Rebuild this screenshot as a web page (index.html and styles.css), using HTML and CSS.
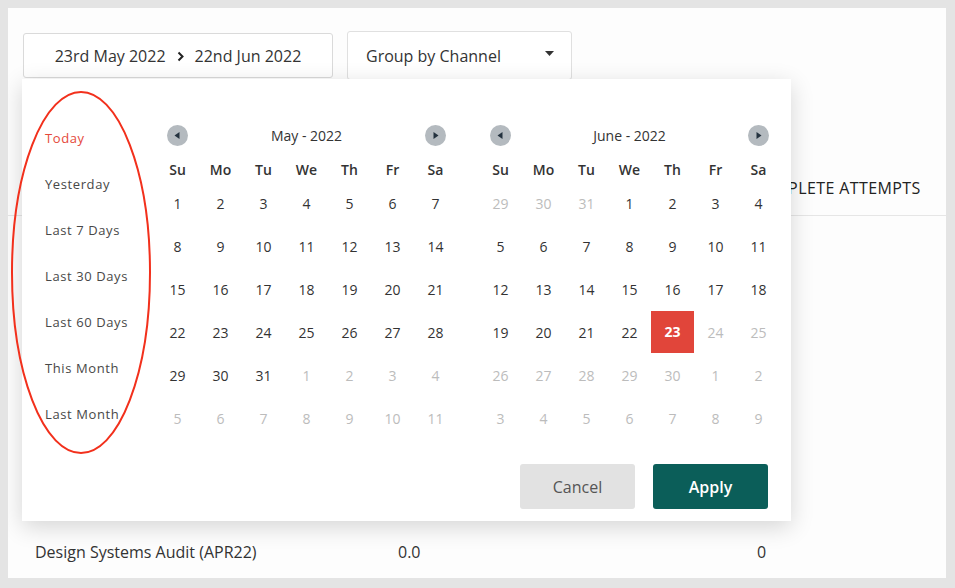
FILE: index.html
```html
<!DOCTYPE html>
<html lang="en">
<head>
<meta charset="utf-8">
<title>Date range picker</title>
<link rel="stylesheet" href="styles.css">
</head>
<body>
<div class="card">
  <div class="toolbar">
    <button class="range">
      <span>23rd May 2022</span>
      <svg class="chev" width="7" height="11" viewBox="0 0 7 11"><path d="M1.5 1.5 L5.5 5.5 L1.5 9.5" fill="none" stroke="#222" stroke-width="2"/></svg>
      <span>22nd Jun 2022</span>
    </button>
    <div class="select">
      <span>Group by Channel</span>
      <svg width="9" height="5" viewBox="0 0 9 5"><path d="M0 0 H9 L4.5 5 Z" fill="#333"/></svg>
    </div>
  </div>

  <div class="table">
    <div class="thead">
      <span class="c1"></span>
      <span class="c2"></span>
      <span class="c3">COMPLETE ATTEMPTS</span>
    </div>
    <div class="trow">
      <span class="c1">Design Systems Audit (APR22)</span>
      <span class="c2">0.0</span>
      <span class="c3">0</span>
    </div>
  </div>

  <div class="picker">
    <div class="picker-body">
      <ul class="presets">
        <li class="active">Today</li>
        <li>Yesterday</li>
        <li>Last 7 Days</li>
        <li>Last 30 Days</li>
        <li>Last 60 Days</li>
        <li>This Month</li>
        <li>Last Month</li>
      </ul>
      <div class="months">
        <div class="month">
          <div class="nav">
            <svg class="navbtn" width="21" height="21" viewBox="0 0 21 21"><circle cx="10.5" cy="10.5" r="10.5" fill="#b4babf"/><path d="M7.5 10.5 L12.5 7 V14 Z" fill="#24323f"/></svg>
            <span class="title">May - 2022</span>
            <svg class="navbtn" width="21" height="21" viewBox="0 0 21 21"><circle cx="10.5" cy="10.5" r="10.5" fill="#b4babf"/><path d="M13.5 10.5 L8.5 7 V14 Z" fill="#24323f"/></svg>
          </div>
          <div class="dow"><span>Su</span><span>Mo</span><span>Tu</span><span>We</span><span>Th</span><span>Fr</span><span>Sa</span></div>
          <div class="grid">
            <span>1</span><span>2</span><span>3</span><span>4</span><span>5</span><span>6</span><span>7</span>
            <span>8</span><span>9</span><span>10</span><span>11</span><span>12</span><span>13</span><span>14</span>
            <span>15</span><span>16</span><span>17</span><span>18</span><span>19</span><span>20</span><span>21</span>
            <span>22</span><span>23</span><span>24</span><span>25</span><span>26</span><span>27</span><span>28</span>
            <span>29</span><span>30</span><span>31</span><span class="off">1</span><span class="off">2</span><span class="off">3</span><span class="off">4</span>
            <span class="off">5</span><span class="off">6</span><span class="off">7</span><span class="off">8</span><span class="off">9</span><span class="off">10</span><span class="off">11</span>
          </div>
        </div>
        <div class="month">
          <div class="nav">
            <svg class="navbtn" width="21" height="21" viewBox="0 0 21 21"><circle cx="10.5" cy="10.5" r="10.5" fill="#b4babf"/><path d="M7.5 10.5 L12.5 7 V14 Z" fill="#24323f"/></svg>
            <span class="title">June - 2022</span>
            <svg class="navbtn" width="21" height="21" viewBox="0 0 21 21"><circle cx="10.5" cy="10.5" r="10.5" fill="#b4babf"/><path d="M13.5 10.5 L8.5 7 V14 Z" fill="#24323f"/></svg>
          </div>
          <div class="dow"><span>Su</span><span>Mo</span><span>Tu</span><span>We</span><span>Th</span><span>Fr</span><span>Sa</span></div>
          <div class="grid">
            <span class="off">29</span><span class="off">30</span><span class="off">31</span><span>1</span><span>2</span><span>3</span><span>4</span>
            <span>5</span><span>6</span><span>7</span><span>8</span><span>9</span><span>10</span><span>11</span>
            <span>12</span><span>13</span><span>14</span><span>15</span><span>16</span><span>17</span><span>18</span>
            <span>19</span><span>20</span><span>21</span><span>22</span><span class="sel">23</span><span class="off">24</span><span class="off">25</span>
            <span class="off">26</span><span class="off">27</span><span class="off">28</span><span class="off">29</span><span class="off">30</span><span class="off">1</span><span class="off">2</span>
            <span class="off">3</span><span class="off">4</span><span class="off">5</span><span class="off">6</span><span class="off">7</span><span class="off">8</span><span class="off">9</span>
          </div>
        </div>
      </div>
    </div>
    <div class="footer">
      <button class="btn cancel">Cancel</button>
      <button class="btn apply">Apply</button>
    </div>
  </div>

  <svg class="annot" width="200" height="470" viewBox="0 0 200 470"><ellipse cx="73" cy="264.5" rx="69" ry="180.5" fill="none" stroke="#f2301c" stroke-width="2"/></svg>
</div>
</body>
</html>
```

FILE: styles.css
```css
* { box-sizing: border-box; }

html, body {
  margin: 0;
  padding: 0;
}

body {
  background: #e4e4e4;
  padding: 8px;
  font-family: "Open Sans", "Noto Sans", sans-serif;
  color: #333;
}

.card {
  position: relative;
  width: 938px;
  height: 570px;
  background: #fdfdfd;
  overflow: hidden;
}

.toolbar {
  display: flex;
  align-items: center;
  gap: 14px;
  padding: 23px 0 0 15px;
  height: 72px;
}

.range {
  width: 310px;
  height: 45px;
  display: flex;
  align-items: center;
  justify-content: center;
  gap: 11px;
  background: #fff;
  border: 1px solid #dadada;
  border-radius: 3px;
  font-family: inherit;
  font-size: 16px;
  color: #333;
  padding: 0;
}

.chev { margin-top: 1px; }

.select {
  width: 225px;
  height: 49px;
  display: flex;
  align-items: center;
  justify-content: space-between;
  padding: 0 17px 0 18px;
  background: #fff;
  border: 1px solid #e0e0e0;
  border-radius: 3px;
  font-size: 16px;
  color: #333;
}

.select svg { margin-top: -4px; }

.table {
  padding-top: 96px;
}

.thead, .trow {
  display: flex;
  padding-left: 27px;
  font-size: 16px;
  line-height: 24px;
}

.thead {
  padding-bottom: 15px;
  border-bottom: 1px solid #e6e6e6;
  text-transform: uppercase;
  color: #222;
}

.thead .c3 {
  margin-left: -7px;
  letter-spacing: 0.4px;
}

.trow {
  margin-top: 324px;
  color: #333;
}

.c1 { width: 363px; }
.c2 { width: 359px; }
.c3 { flex: 1; }

.picker {
  position: absolute;
  left: 14px;
  top: 71px;
  width: 769px;
  height: 442px;
  background: #fff;
  box-shadow: 0 6px 22px rgba(0, 0, 0, 0.16);
  display: flex;
  flex-direction: column;
}

.picker-body {
  display: flex;
}

.presets {
  list-style: none;
  margin: 0;
  width: 134px;
  padding: 36px 0 0 23px;
}

.presets li {
  height: 46px;
  line-height: 46px;
  font-size: 13px;
  letter-spacing: 0.6px;
  color: #484848;
}

.presets li.active { color: #e5493a; }

.months {
  display: flex;
  gap: 22px;
  padding-top: 35px;
}

.month { width: 301px; }

.nav {
  height: 43px;
  display: flex;
  align-items: center;
  justify-content: space-between;
  padding: 0 11px;
}

.navbtn { display: block; }

.title {
  font-size: 14px;
  color: #333;
}

.dow, .grid {
  display: grid;
  grid-template-columns: repeat(7, 43px);
}

.dow span {
  height: 25px;
  line-height: 25px;
  text-align: center;
  font-size: 14px;
  font-weight: 600;
  color: #333;
}

.grid span {
  height: 43px;
  line-height: 43px;
  text-align: center;
  font-size: 14px;
  color: #333;
}

.grid span.off { color: #bcbcbc; }

.grid span.sel {
  background: #e1453a;
  color: #fff;
  font-weight: 700;
  height: 42px;
  line-height: 42px;
}

.footer {
  margin-top: auto;
  display: flex;
  justify-content: flex-end;
  gap: 18px;
  padding: 0 23px 12px 0;
}

.btn {
  width: 115px;
  height: 45px;
  border: none;
  border-radius: 3px;
  font-family: inherit;
  font-size: 16px;
}

.cancel {
  background: #e2e2e2;
  color: #555;
}

.apply {
  background: #0b5e59;
  color: #fff;
  font-weight: 600;
}

.annot {
  position: absolute;
  left: 0;
  top: 0;
  pointer-events: none;
}
```
